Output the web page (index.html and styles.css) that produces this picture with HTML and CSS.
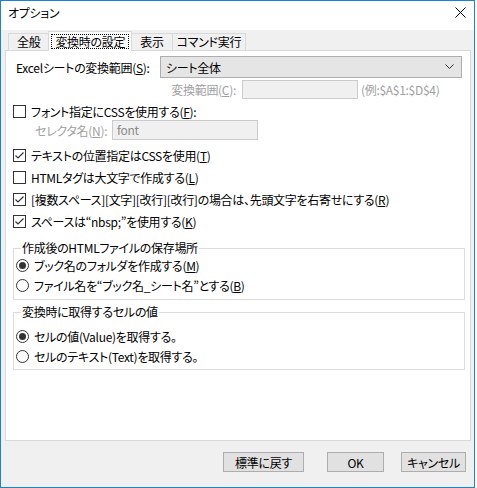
FILE: index.html
```html
<!DOCTYPE html>
<html lang="ja">
<head>
  <meta charset="UTF-8">
  <title>オプション</title>
  <link rel="stylesheet" href="styles.css">
</head>
<body>

  <div class="window">
    <div class="titlebar">
      <span class="title">オプション</span>
      <svg class="close" width="11" height="11" viewBox="0 0 11 11">
        <path d="M0.5 0.5 L10.5 10.5 M10.5 0.5 L0.5 10.5" stroke="#000" stroke-width="1" fill="none"/>
      </svg>
    </div>

    <div class="tabs">
      <div class="tab">全般</div>
      <div class="tab active"><span class="focus">変換時の設定</span></div>
      <div class="tab">表示</div>
      <div class="tab tab-narrow">コマンド実行</div>
    </div>

    <div class="panel">
      <div class="row row-range">
        <span class="label-range">Excelシートの変換範囲(<u>S</u>):</span>
        <div class="combo">
          <span>シート全体</span>
          <svg width="9" height="6" viewBox="0 0 9 6">
            <path d="M0.5 0.5 L4.5 4.5 L8.5 0.5" stroke="#333" fill="none"/>
          </svg>
        </div>
      </div>

      <div class="row row-cells">
        <span class="disabled label-cells">変換範囲(<u>C</u>):</span>
        <div class="textbox cells-box"></div>
        <span class="disabled hint">(例:$A$1:$D$4)</span>
      </div>

      <div class="row check-row first">
        <span class="checkbox"></span>
        <span>フォント指定にCSSを使用する(<u>F</u>):</span>
      </div>

      <div class="row row-selector">
        <span class="disabled label-selector">セレクタ名(<u>N</u>):</span>
        <div class="textbox selector-box">font</div>
      </div>

      <div class="row check-row">
        <span class="checkbox checked"></span>
        <span>テキストの位置指定はCSSを使用(<u>T</u>)</span>
      </div>
      <div class="row check-row">
        <span class="checkbox"></span>
        <span>HTMLタグは大文字で作成する(<u>L</u>)</span>
      </div>
      <div class="row check-row">
        <span class="checkbox checked"></span>
        <span>[複数スペース][文字][改行][改行]の場合は、先頭文字を右寄せにする(<u>R</u>)</span>
      </div>
      <div class="row check-row">
        <span class="checkbox checked"></span>
        <span>スペースは“nbsp;”を使用する(<u>K</u>)</span>
      </div>

      <fieldset class="group group-save">
        <legend>作成後のHTMLファイルの保存場所</legend>
        <div class="radio-row">
          <span class="radio checked"></span>
          <span>ブック名のフォルダを作成する(<u>M</u>)</span>
        </div>
        <div class="radio-row">
          <span class="radio"></span>
          <span>ファイル名を“ブック名_シート名”とする(<u>B</u>)</span>
        </div>
      </fieldset>

      <fieldset class="group group-value">
        <legend>変換時に取得するセルの値</legend>
        <div class="radio-row">
          <span class="radio checked"></span>
          <span>セルの値(Value)を取得する。</span>
        </div>
        <div class="radio-row">
          <span class="radio"></span>
          <span>セルのテキスト(Text)を取得する。</span>
        </div>
      </fieldset>
    </div>

    <div class="buttons">
      <button class="btn btn-reset">標準に戻す</button>
      <button class="btn btn-ok">OK</button>
      <button class="btn btn-cancel">キャンセル</button>
    </div>
  </div>

</body>
</html>
```

FILE: styles.css
```css
body {
  margin: 0;
  background-color: #fff;
  font-family: "Noto Sans CJK JP", sans-serif;
  font-size: 12px;
  font-feature-settings: "palt";
  letter-spacing: -0.3px;
  color: #000;
}

u {
  text-decoration: underline;
  text-underline-offset: 1px;
}

.window {
  box-sizing: border-box;
  width: 475px;
  height: 488px;
  border: 1px solid #1883d7;
  background-color: #f0f0f0;
}

.titlebar {
  height: 29px;
  background-color: #fff;
  display: flex;
  align-items: center;
  justify-content: space-between;
  padding: 0 8px 0 7px;
}

.title {
  margin-top: -6px;
}

.close {
  margin-top: -6px;
}

/* tab strip */
.tabs {
  display: flex;
  align-items: flex-end;
  height: 20px;
  padding-left: 8px;
}

.tab {
  box-sizing: border-box;
  height: 17px;
  padding: 0 8px;
  line-height: 15px;
  border: 1px solid #d9d9d9;
  border-bottom: none;
  background-color: #f0f0f0;
  margin-left: -1px;
}

.tab-narrow {
  padding: 0 4px;
}

.tab.active {
  height: 20px;
  padding: 2px 2px 0;
  background-color: #fff;
  position: relative;
  z-index: 1;
  margin-bottom: -1px;
}

.focus {
  display: block;
  border: 1px dotted #000;
  padding: 0 3px;
  line-height: 13px;
}

/* panel */
.panel {
  box-sizing: border-box;
  height: 391px;
  margin: 0 3px 0 4px;
  border: 1px solid #d9d9d9;
  background-color: #fff;
  padding-top: 5px;
}

.row {
  display: flex;
  align-items: center;
}

.row-range {
  height: 22px;
  padding-left: 10px;
}

.label-range {
  width: 144px;
}

.combo {
  box-sizing: border-box;
  width: 302px;
  height: 22px;
  border: 1px solid #adadad;
  background-color: #e5e5e5;
  display: flex;
  align-items: center;
  justify-content: space-between;
  padding: 0 7px 0 5px;
}

.row-cells {
  height: 19px;
  margin-top: 2px;
}

.disabled {
  color: #a0a0a0;
}

.label-cells {
  width: 230px;
  text-align: right;
  padding-right: 6px;
}

.textbox {
  box-sizing: border-box;
  border: 1px solid #cccccc;
  background-color: #f0f0f0;
  color: #8a8a8a;
}

.cells-box {
  width: 116px;
  height: 19px;
}

.hint {
  margin-left: 3px;
}

.check-row {
  height: 22px;
  padding-left: 7px;
}

.check-row.first {
  height: 16px;
  margin-top: 4px;
}

.checkbox {
  box-sizing: border-box;
  width: 13px;
  height: 13px;
  border: 1px solid #333;
  background-color: #fff;
  margin-right: 5px;
  flex-shrink: 0;
}

.checkbox.checked {
  background: #fff url("data:image/svg+xml,%3Csvg xmlns='http://www.w3.org/2000/svg' width='11' height='11'%3E%3Cpath d='M1.5 5.5 L4 8 L9.5 2.5' stroke='%23333' stroke-width='1.2' fill='none'/%3E%3C/svg%3E") no-repeat center;
}

.row-selector {
  height: 20px;
  margin-top: 1px;
  margin-bottom: 4px;
}

.label-selector {
  width: 77px;
  padding-left: 29px;
}

.selector-box {
  width: 146px;
  height: 20px;
  line-height: 18px;
  padding-left: 4px;
}

/* group boxes */
.group {
  margin: 9px 5px 0 7px;
  padding: 0 0 4px 2px;
  border: 1px solid #dcdcdc;
}

.group legend {
  padding: 0 1px;
  margin-left: 5px;
  line-height: 14px;
}

.group-value {
  margin-top: 5px;
  padding-top: 7px;
  padding-bottom: 3px;
}

.radio-row {
  display: flex;
  align-items: center;
  height: 20px;
}

.radio {
  box-sizing: border-box;
  width: 13px;
  height: 13px;
  border: 1px solid #333;
  border-radius: 50%;
  margin-right: 5px;
  display: flex;
  align-items: center;
  justify-content: center;
}

.radio.checked::after {
  content: "";
  width: 7px;
  height: 7px;
  border-radius: 50%;
  background-color: #333;
}

/* bottom buttons */
.buttons {
  display: flex;
  padding: 11px 0 0 222px;
}

.btn {
  box-sizing: border-box;
  height: 20px;
  border: 1px solid #adadad;
  background-color: #e1e1e1;
  font-family: inherit;
  font-size: 12px;
  font-feature-settings: "palt";
  letter-spacing: -0.3px;
  padding: 0;
  color: #000;
}

.btn-reset {
  width: 81px;
}

.btn-ok {
  width: 57px;
  margin-left: 23px;
}

.btn-cancel {
  width: 65px;
  margin-left: 17px;
}
```
